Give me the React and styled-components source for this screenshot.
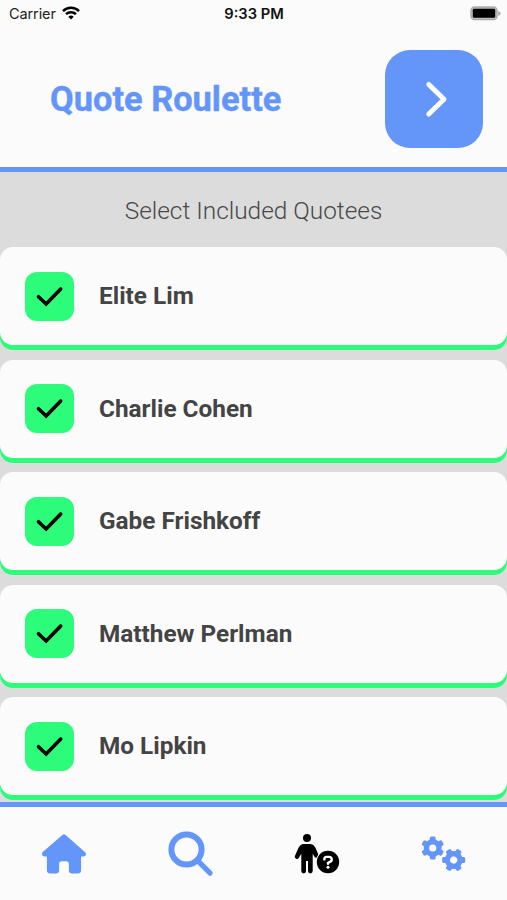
import React from "react";
import styled, { createGlobalStyle } from "styled-components";
import { FaHouse } from "react-icons/fa6";

const blue = "#6495f9";
const green = "#2dfc7b";
const paper = "#fbfbfb";

const GlobalStyle = createGlobalStyle`
  * { box-sizing: border-box; }
  body { margin: 0; background: ${paper}; font-family: Roboto, sans-serif; }
`;

const Screen = styled.div`
  width: 507px;
  height: 900px;
  display: flex;
  flex-direction: column;
  overflow: hidden;
  background: ${paper};
`;

const StatusBar = styled.div`
  height: 27px;
  flex: none;
  display: grid;
  grid-template-columns: 1fr auto 1fr;
  align-items: center;
  padding: 0 6px 0 9px;
  font: 400 14.5px Inter, sans-serif;
  color: #222;
`;

const Carrier = styled.div`
  display: flex;
  align-items: center;
  gap: 6px;
  letter-spacing: -0.1px;
  svg { margin-top: -2px; }
`;

const Clock = styled.div`
  margin-left: -2px;
  font-weight: 600;
  font-size: 14.7px;
  color: #111;
`;

const BatterySlot = styled.div`
  display: flex;
  justify-content: flex-end;
`;

const Header = styled.header`
  height: 145px;
  flex: none;
  display: flex;
  align-items: center;
  justify-content: space-between;
  padding: 3px 24.5px 0 50px;
  border-bottom: 5px solid ${blue};
`;

const Title = styled.h1`
  margin: 0;
  padding-top: 1px;
  font-size: 34.4px;
  line-height: 40px;
  font-weight: 700;
  color: ${blue};
  -webkit-text-stroke: 0.4px ${blue};
  white-space: nowrap;
`;

const NextButton = styled.button`
  width: 98px;
  height: 98px;
  padding: 0;
  border: 0;
  border-radius: 25px;
  background: ${blue};
  display: flex;
  align-items: center;
  justify-content: center;
`;

const Content = styled.main`
  flex: 1;
  min-height: 0;
  overflow: hidden;
  background: #dcdcdc;
`;

const Subtitle = styled.h2`
  margin: 0;
  height: 75px;
  padding-top: 2px;
  display: flex;
  align-items: center;
  justify-content: center;
  font-size: 24.4px;
  font-weight: 300;
  color: #484848;
`;

const QuoteeList = styled.ul`
  list-style: none;
  margin: 0;
  padding: 0;
  display: flex;
  flex-direction: column;
  gap: 14.5px;
`;

const QuoteeRow = styled.li`
  height: 98px;
  display: flex;
  align-items: center;
  gap: 25px;
  padding: 0 25px;
  border-radius: 13px;
  box-shadow: 0 5px 0 ${green};
  background: ${paper};
`;

const CheckBox = styled.span`
  width: 49px;
  height: 49px;
  border-radius: 12px;
  background: ${green};
  display: flex;
  align-items: center;
  justify-content: center;
`;

const QuoteeName = styled.span`
  padding-bottom: 1px;
  font-size: 24.35px;
  font-weight: 700;
  color: #444;
`;

const TabBar = styled.nav`
  height: 98px;
  flex: none;
  display: grid;
  grid-template-columns: repeat(4, 1fr);
  border-top: 5px solid ${blue};
`;

const Tab = styled.a`
  display: flex;
  align-items: center;
  justify-content: center;
  padding-left: 1px;
  color: ${(p) => (p.$active ? "#000" : blue)};
`;

const WifiIcon = () => (
  <svg width="18" height="14" viewBox="0 0 18 14" fill="none" stroke="#000" strokeWidth="2.5">
    <path d="M1 5.1a11.5 11.5 0 0 1 16 0M4 8.2a7.2 7.2 0 0 1 10 0" />
    <path d="M6.3 10.7a4 4 0 0 1 5.4 0L9 13.5Z" fill="#000" stroke="none" />
  </svg>
);

const BatteryIcon = () => (
  <svg width="31" height="15" viewBox="0 0 31 15">
    <rect x="1" y="1" width="26" height="12.6" rx="3.6" fill="#bbb" stroke="#aaa" strokeWidth="1.4" />
    <rect x="2.8" y="2.8" width="22.4" height="9" rx="1.4" fill="#000" />
    <path d="M28.2 5q2.4 .7 2.4 2.4t-2.4 2.4Z" fill="#aaa" />
  </svg>
);

const ChevronIcon = () => (
  <svg width="98" height="98" viewBox="0 0 98 98" fill="none" stroke="#fff" strokeWidth="5" strokeLinecap="round" strokeLinejoin="round">
    <path d="M43.8 34.5 59 49.3 43.8 64" />
  </svg>
);

const CheckIcon = () => (
  <svg width="49" height="49" viewBox="0 0 49 49" fill="none" stroke="#000" strokeWidth="3.6" strokeLinecap="round" strokeLinejoin="miter">
    <path d="m13.5 24.7 7.6 7.3 14.6-15" />
  </svg>
);

const SearchIcon = () => (
  <svg width="46" height="46" viewBox="0 0 46 46" fill="none" stroke="currentColor" strokeLinecap="round">
    <circle cx="18.5" cy="18.5" r="15.1" strokeWidth="6" />
    <path d="m30.4 30.4 11.7 11.7" strokeWidth="5.2" />
  </svg>
);

const PersonQuestionIcon = () => (
  <svg width="46" height="42" viewBox="0 0 46 42" fill="currentColor">
    <circle cx="13" cy="5" r="4" />
    <path d="M10.5 11h5c3.6 0 5.2 2 6.2 4.3l2.6 6.2a2.2 2.2 0 0 1-4 1.9l-1.6-2.6v17.3a2.35 2.35 0 0 1-4.7 0V28h-2v10.1a2.35 2.35 0 0 1-4.7 0V20.8l-2.3 3.8a2.2 2.2 0 0 1-4-1.9l3.3-7.4c1.1-2.3 2.6-4.3 6.2-4.3Z" />
    <circle cx="34" cy="29" r="12.2" fill={paper} />
    <circle cx="34" cy="29" r="11.2" />
    <path d="M30.3 26.4v-.2c0-1.3 1-2.3 2.3-2.3h2.6a2.5 2.5 0 0 1 1.2 4.7L34 29.9v.9" fill="none" stroke="#fff" strokeWidth="2.4" strokeLinecap="round" />
    <circle cx="34" cy="34.2" r="1.5" fill="#fff" />
  </svg>
);

const Gear = ({ x, y, turn }) => (
  <g transform={`translate(${x} ${y}) rotate(${turn})`}>
    <circle r="6.3" fill="none" stroke="currentColor" strokeWidth="5.4" />
    {[0, 60, 120, 180, 240, 300].map((angle) => (
      <rect key={angle} x="-2.9" y="-11.5" width="5.8" height="6" rx="1.5" fill="currentColor" transform={`rotate(${angle})`} />
    ))}
  </g>
);

const GearsIcon = () => (
  <svg width="46" height="40" viewBox="0 0 46 40">
    <Gear x="11.7" y="14" turn={0} />
    <Gear x="32.7" y="26" turn={30} />
  </svg>
);

const quotees = ["Elite Lim", "Charlie Cohen", "Gabe Frishkoff", "Matthew Perlman", "Mo Lipkin"];

export default function App() {
  return (
    <>
      <GlobalStyle />
      <Screen>
        <StatusBar>
          <Carrier>Carrier <WifiIcon /></Carrier>
          <Clock>9:33 PM</Clock>
          <BatterySlot><BatteryIcon /></BatterySlot>
        </StatusBar>
        <Header>
          <Title>Quote Roulette</Title>
          <NextButton aria-label="Next"><ChevronIcon /></NextButton>
        </Header>
        <Content>
          <Subtitle>Select Included Quotees</Subtitle>
          <QuoteeList>
            {quotees.map((name) => (
              <QuoteeRow key={name}>
                <CheckBox><CheckIcon /></CheckBox>
                <QuoteeName>{name}</QuoteeName>
              </QuoteeRow>
            ))}
          </QuoteeList>
        </Content>
        <TabBar>
          <Tab><FaHouse size={44} /></Tab>
          <Tab><SearchIcon /></Tab>
          <Tab $active><PersonQuestionIcon /></Tab>
          <Tab><GearsIcon /></Tab>
        </TabBar>
      </Screen>
    </>
  );
}
